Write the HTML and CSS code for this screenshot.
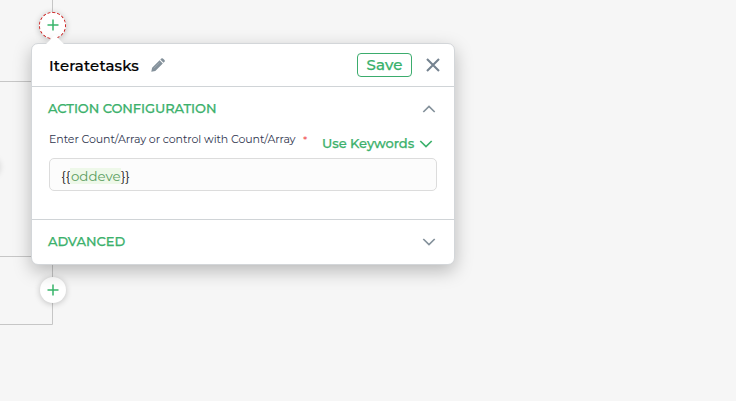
FILE: index.html
```
<!DOCTYPE html>
<html lang="en">
<head>
<meta charset="utf-8">
<title>Iteratetasks</title>
<link rel="stylesheet" href="styles.css">
</head>
<body>
<main class="canvas">
  <svg class="wires" width="60" height="401" viewBox="0 0 60 401" fill="none" stroke="#c6c6c6">
    <path d="M52.500 0V324.500H0M0 81.500H52M0 256.500H52"/>
  </svg>
  <span class="node-edge"></span>
  <button class="add add-active" aria-label="Add step"><svg width="12" height="12" viewBox="0 0 12 12"><path d="M6 .5v11M.5 6h11"/></svg></button>
  <button class="add add-next" aria-label="Add step"><svg width="12" height="12" viewBox="0 0 12 12"><path d="M6 .5v11M.5 6h11"/></svg></button>

  <section class="panel">
    <span class="arrow"></span>
    <header class="head">
      <h1 class="title">Iteratetasks</h1>
      <svg class="pencil" width="14" height="14" viewBox="0 0 14 14"><path d="M.3 13.700 1.100 9.700 8.600 2.200 11.800 5.400 4.300 12.900ZM9.300 1.500 10.300.5Q11.100-.2 11.900.5L13.500 2.100Q14.200 2.900 13.500 3.700L12.500 4.700Z"/><path class="nib" d="M2.900 10.300 8.700 4.500"/></svg>
      <button class="save">Save</button>
      <svg class="close" width="14" height="14" viewBox="0 0 14 14"><path d="M1 1l12 12M13 1 1 13"/></svg>
    </header>
    <div class="config">
      <div class="bar">
        <h2 class="heading">ACTION CONFIGURATION</h2>
        <svg class="chevron" width="14" height="8" viewBox="0 0 14 8"><path d="M1.300 7l5.700-5.500L12.700 7"/></svg>
      </div>
      <div class="field-top">
        <label class="label">Enter Count/Array or control with Count/Array</label><span class="star">*</span>
        <button class="keywords">Use Keywords</button>
        <svg class="chevron green" width="14" height="8" viewBox="0 0 14 8"><path d="M1.300 1l5.700 5.500L12.700 1"/></svg>
      </div>
      <div class="input"><span>{{</span><span class="token">oddeve</span><span>}}</span></div>
    </div>
    <div class="bar advanced">
      <h2 class="heading">ADVANCED</h2>
      <svg class="chevron" width="14" height="8" viewBox="0 0 14 8"><path d="M1.300 1l5.700 5.500L12.700 1"/></svg>
    </div>
  </section>
</main>
</body>
</html>
```
FILE: styles.css
```
* { box-sizing: border-box; }
body { margin: 0; font-family: Montserrat, Inter, sans-serif; }
h1, h2 { margin: 0; }
button { padding: 0; font-family: inherit; }
svg { display: block; flex: none; }
.canvas { position: relative; width: 736px; height: 401px; overflow: hidden; background: #f6f6f6; }
.wires { position: absolute; left: 0; top: 0; }
.node-edge { position: absolute; left: -20px; top: 156px; width: 20px; height: 20px; border-radius: 50%; box-shadow: 0 1px 6px rgba(0,0,0,.15); }
.add { position: absolute; left: 40px; width: 26px; height: 26px; display: flex; align-items: center; justify-content: center; border: 0; border-radius: 50%; background: #fff; box-shadow: 0 1px 6px rgba(0,0,0,.22); }
.add svg { fill: none; stroke: #38b56b; stroke-width: 1.500; }
.add-active { left: 39px; top: 12px; width: 27px; height: 27px; border: 1px dashed #cf2020; }
.add-active svg { margin-left: 1px; margin-top: -2px; }
.add-next { top: 277px; }
.add-next svg { margin-top: -1px; }
.panel { position: absolute; left: 31px; top: 43px; width: 424px; height: 222px; border: 1px solid #d3d6d9; border-radius: 7px; background: #fff; box-shadow: 0 6px 18px rgba(0,0,0,.25); }
.arrow { position: absolute; left: 16px; top: -6px; width: 14px; height: 14px; background: #fff; transform: rotate(45deg); }
.head { position: relative; height: 43px; display: flex; align-items: center; padding: 0 14px 0 17px; border-bottom: 1px solid #d0d4d7; }
.title { width: 103px; font-size: 15px; font-weight: 500; letter-spacing: .150px; -webkit-text-stroke: .2px; line-height: 20px; color: #000; white-space: nowrap; padding-top: 1px; }
.pencil { fill: #84919b; margin-left: -1px; }
.nib { fill: none; stroke: #b8c1c7; stroke-width: .5; }
.save { width: 55px; height: 24px; margin-left: auto; margin-right: 14px; padding-bottom: 1px; border: 1px solid #3bac6d; border-radius: 4px; background: #fff; color: #38b16b; font-size: 15px; font-weight: 500; letter-spacing: .1px; -webkit-text-stroke: .25px; }
.close { fill: none; stroke: #758390; stroke-width: 2.100; }
.config { height: 133px; padding: 12px 17px 0; border-bottom: 1px solid #d0d4d7; }
.bar { display: flex; align-items: center; justify-content: space-between; height: 20px; margin-left: -1px; }
.heading { font-size: 13px; font-weight: 500; letter-spacing: -.060px; -webkit-text-stroke: .25px; color: #3cb16c; line-height: 18px; white-space: nowrap; margin-top: -3px; }
.bar .chevron { margin-right: 1px; }
.chevron { fill: none; stroke: #84919b; stroke-width: 1.700; }
.field-top { display: flex; align-items: center; height: 39px; }
.label { width: 254px; font-size: 11px; letter-spacing: -.080px; line-height: 16px; color: #30364f; white-space: nowrap; margin-top: 1px; }
.star { width: 19px; font-size: 11px; color: #f04848; margin-top: 2px; }
.keywords { width: 92px; border: 0; background: none; color: #3cb16c; font-size: 13px; font-weight: 500; letter-spacing: -.050px; -webkit-text-stroke: .25px; white-space: nowrap; text-align: left; margin-right: 5px; margin-top: 9px; }
.green { stroke: #3cb16c; margin-top: 10px; }
.input { height: 33px; display: flex; align-items: center; padding: 3px 11px 0; border: 1px solid #dcdcdc; border-radius: 5px; background: #fcfcfc; font-size: 13.400px; line-height: 16px; color: #222; }
.input span { padding-left: .3px; }
.input .token { padding-left: .7px; color: #5b9d5f; background: #eef8e9; }
.advanced { height: 44px; margin: 0 17px 0 16px; }
.advanced .chevron { margin-top: -1px; }
```
